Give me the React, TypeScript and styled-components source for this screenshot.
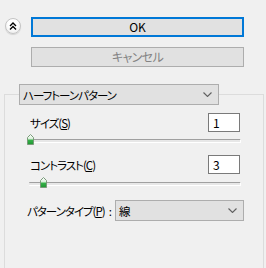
import React from 'react';
import styled, { createGlobalStyle } from 'styled-components';

const GlobalStyle = createGlobalStyle`
  html, body {
    margin: 0;
    padding: 0;
    background: #f0f0f0;
  }
  body {
    font-family: 'Noto Sans CJK JP', 'Noto Sans', sans-serif;
    font-size: 12px;
    font-feature-settings: 'palt';
    color: #000;
  }
`;

const Panel = styled.div`
  width: 266px;
  height: 268px;
  overflow: hidden;
  box-sizing: border-box;
  padding-top: 17px;
  display: flex;
  flex-direction: column;
`;

const TopRow = styled.div`
  display: flex;
  align-items: flex-start;
`;

const CollapseButton = styled.button`
  margin: 1px 0 0 5px;
  width: 16px;
  height: 16px;
  padding: 0;
  border-radius: 50%;
  border: 1px solid #c4c4c4;
  background: radial-gradient(circle at 50% 35%, #ffffff 40%, #e6e6e6 100%);
  box-shadow: 0 1px 1px rgba(0, 0, 0, 0.12);
  display: flex;
  align-items: center;
  justify-content: center;
  box-sizing: border-box;

  svg {
    display: block;
  }
`;

const ButtonColumn = styled.div`
  margin-left: 10px;
  width: 213px;
  display: flex;
  flex-direction: column;
  gap: 10px;
`;

const DialogButton = styled.button<{ $default?: boolean }>`
  height: 20px;
  box-sizing: border-box;
  padding: 0;
  font-family: inherit;
  font-size: 12px;
  font-feature-settings: 'palt';
  letter-spacing: ${p => (p.$default ? '0' : '-0.6px')};
  line-height: 16px;
  background: #e1e1e1;
  color: ${p => (p.disabled ? '#838383' : '#000')};
  border: ${p => (p.$default ? '2px solid #0078d7' : '1px solid #adadad')};
`;

const GroupBox = styled.fieldset`
  margin: 17px 2px 0 4px;
  padding: 0;
  min-width: 0;
  flex: 1;
  border: 1px solid #dcdcdc;
  border-bottom: none;
`;

const GroupLegend = styled.legend`
  margin-left: 14px;
  padding: 0;
`;

const ComboBox = styled.div<{ $width: number }>`
  width: ${p => p.$width}px;
  flex-shrink: 0;
  height: 21px;
  box-sizing: border-box;
  border: 1px solid #adadad;
  background: #e1e1e1;
  display: flex;
  align-items: center;
  justify-content: space-between;
  padding: 0 6px 0 3px;

  svg {
    display: block;
  }
`;

const GroupBody = styled.div`
  padding: 0 19px 0 22px;
  display: flex;
  flex-direction: column;
`;

const FieldRow = styled.div<{ $top: number }>`
  margin-top: ${p => p.$top}px;
  display: flex;
  align-items: center;
  justify-content: space-between;
  padding: 0 4px 0 3px;
`;

const PatternRow = styled.div`
  margin-top: 11px;
  display: flex;
  align-items: center;
  justify-content: space-between;
`;

const Label = styled.span`
  font-size: 11.5px;
  line-height: 16px;
  white-space: nowrap;
  letter-spacing: -1px;

  u {
    text-decoration: underline;
    text-underline-offset: 1px;
  }
`;

const Colon = styled.span`
  margin-left: 4px;
`;

const NumberBox = styled.div`
  width: 32px;
  height: 19px;
  box-sizing: border-box;
  border: 1px solid #7a7a7a;
  background: #fff;
  padding-left: 4px;
  line-height: 17px;
`;

const SliderWrap = styled.div<{ $top: number }>`
  position: relative;
  margin: ${p => p.$top}px 3px 0 0;
  height: 12px;
`;

const SliderTrack = styled.div`
  position: absolute;
  left: 2px;
  right: 0;
  top: 5px;
  height: 2px;
  border-top: 1px solid #a0a0a0;
  border-right: 1px solid #fff;
  border-bottom: 1px solid #fff;
  border-radius: 1px;
  background: #e7e7e7;
`;

const SliderThumb = styled.svg`
  position: absolute;
  top: 0;
  display: block;
`;

const Chevron = () => (
  <svg width="9" height="5" viewBox="0 0 9 5">
    <path d="M0.5 0.5 L4.5 4.5 L8.5 0.5" fill="none" stroke="#606060" strokeWidth="1.1" />
  </svg>
);

const Slider: React.FC<{ value: number; min: number; max: number }> = ({ value, min, max }) => {
  const ratio = (value - min) / (max - min);
  return (
    <>
      <SliderTrack />
      <SliderThumb
        width="7"
        height="11"
        viewBox="0 0 7 11"
        style={{ left: `calc((100% - 7px) * ${ratio})` }}
      >
        <defs>
          <linearGradient id="thumbFill" x1="0" y1="0" x2="0" y2="1">
            <stop offset="0" stopColor="#ffffff" />
            <stop offset="0.45" stopColor="#d8efd8" />
            <stop offset="0.55" stopColor="#37b24a" />
            <stop offset="1" stopColor="#1e9631" />
          </linearGradient>
        </defs>
        <path
          d="M3.5 0.5 L6.5 3.5 L6.5 10.5 L0.5 10.5 L0.5 3.5 Z"
          fill="url(#thumbFill)"
          stroke="#7a9a7a"
          strokeWidth="1"
        />
      </SliderThumb>
    </>
  );
};

export default function App() {
  return (
    <>
      <GlobalStyle />
      <Panel>
        <TopRow>
          <CollapseButton aria-label="折りたたむ">
            <svg width="8" height="8" viewBox="0 0 8 8">
              <path
                d="M1 4 L4 1 L7 4 M1 7.5 L4 4.5 L7 7.5"
                fill="none"
                stroke="#000"
                strokeWidth="1.4"
              />
            </svg>
          </CollapseButton>
          <ButtonColumn>
            <DialogButton $default>OK</DialogButton>
            <DialogButton disabled>キャンセル</DialogButton>
          </ButtonColumn>
        </TopRow>

        <GroupBox>
          <GroupLegend>
            <ComboBox $width={200}>
              <Label>ハーフトーンパターン</Label>
              <Chevron />
            </ComboBox>
          </GroupLegend>
          <GroupBody>
            <FieldRow $top={8}>
              <Label>
                サイズ(<u>S</u>)
              </Label>
              <NumberBox>1</NumberBox>
            </FieldRow>
            <SliderWrap $top={2}>
              <Slider value={1} min={1} max={33} />
            </SliderWrap>

            <FieldRow $top={9}>
              <Label>
                コントラスト(<u>C</u>)
              </Label>
              <NumberBox>3</NumberBox>
            </FieldRow>
            <SliderWrap $top={3}>
              <Slider value={3} min={1} max={33} />
            </SliderWrap>

            <PatternRow>
              <Label>
                パターンタイプ(<u>P</u>)<Colon>:</Colon>
              </Label>
              <ComboBox $width={129}>
                <Label>線</Label>
                <Chevron />
              </ComboBox>
            </PatternRow>
          </GroupBody>
        </GroupBox>
      </Panel>
    </>
  );
}
